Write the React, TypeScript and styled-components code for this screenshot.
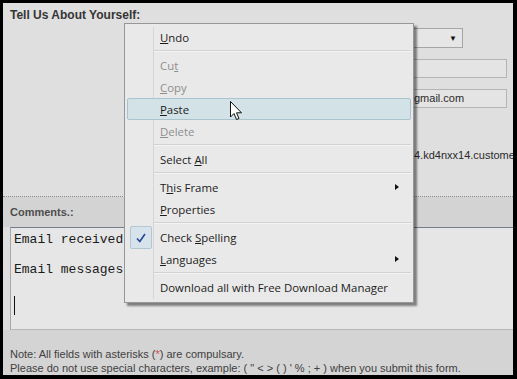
import styled, { createGlobalStyle } from "styled-components";

const GlobalStyle = createGlobalStyle`
  html, body {
    margin: 0;
    padding: 0;
    background: #000;
  }
  body {
    width: 517px;
    height: 379px;
    overflow: hidden;
  }
`;

const Frame = styled.div`
  position: relative;
  width: 510px;
  height: 372px;
  margin: 3px 0 0 3px;
  background: #dfdfdf;
  font-family: "Liberation Sans", Arial, sans-serif;
  overflow: hidden;
  display: flex;
  flex-direction: column;
`;

const TopSection = styled.div`
  height: 195px;
  padding: 5px 0 0 7px;
  box-sizing: border-box;
  border-bottom: 1px dotted #8a8a8a;
  display: flex;
  flex-direction: column;
`;

const Title = styled.div`
  font-size: 12px;
  font-weight: bold;
  color: #353535;
  line-height: 14px;
`;

const Fields = styled.div`
  margin: 6px 0 0 388px;
  display: flex;
  flex-direction: column;
  gap: 11px;
`;

const Select = styled.div`
  width: 65px;
  height: 20px;
  box-sizing: border-box;
  border: 1px solid #a6a6a6;
  background: #e6e6e6;
  display: flex;
  align-items: center;
  justify-content: flex-end;
  padding-right: 5px;
  font-size: 8px;
  color: #111;
`;

const Input = styled.div`
  width: 109px;
  height: 19px;
  box-sizing: border-box;
  border: 1px solid #b4b4b4;
  background: #e4e4e4;
  font-size: 11px;
  line-height: 17px;
  color: #2a2a2a;
  padding-left: 15px;
  white-space: nowrap;
`;

const LongValue = styled.div`
  width: 115px;
  margin-top: 30px;
  padding-left: 16px;
  box-sizing: border-box;
  font-size: 11px;
  color: #2a2a2a;
  white-space: nowrap;
  overflow: hidden;
`;

const CommentsHeader = styled.div`
  height: 30px;
  background: #d3d3d3;
  padding-left: 7px;
  display: flex;
  align-items: center;
  font-size: 11px;
  font-weight: bold;
  color: #4e4e4e;
`;

const TextBox = styled.div`
  margin-left: 7px;
  height: 103px;
  box-sizing: border-box;
  border-top: 1px solid #6f7f8f;
  border-left: 1px solid #a8a8a8;
  border-bottom: 1px solid #b8b8b8;
  background: #e6e6e6;
  padding: 4px 0 0 3px;
  font-family: "Liberation Mono", "Courier New", monospace;
  font-size: 13px;
  line-height: 15px;
  color: #1a1a1a;
  white-space: pre;
`;

const Caret = styled.span`
  display: inline-block;
  width: 1px;
  height: 19px;
  background: #111;
  vertical-align: -6px;
  margin-top: 4px;
`;

const Notes = styled.div`
  flex: 1;
  background: #d4d4d4;
  padding: 17px 0 0 7px;
  font-size: 11px;
  line-height: 14px;
  color: #3f3f3f;
  white-space: nowrap;
`;

const Star = styled.span`
  color: #d84a4a;
`;

const Menu = styled.div`
  position: absolute;
  left: 121px;
  top: 20px;
  width: 290px;
  box-sizing: border-box;
  border: 1px solid #979797;
  background: #e9e9e9;
  padding: 2px 2px 4px;
  box-shadow: 3px 3px 2px rgba(0, 0, 0, 0.45);
  font-family: "Open Sans", "Noto Sans", sans-serif;
  font-size: 11.4px;
  z-index: 5;
`;

const Gutter = styled.div`
  position: absolute;
  left: 28px;
  top: 3px;
  bottom: 3px;
  width: 1px;
  background: #d6d6d6;
`;

const Item = styled.div<{ $disabled?: boolean; $active?: boolean }>`
  position: relative;
  height: 22px;
  box-sizing: border-box;
  display: flex;
  align-items: center;
  padding-left: 32px;
  color: ${(p) => (p.$disabled ? "#8e8e8e" : "#1c1c1c")};
  border: 1px solid ${(p) => (p.$active ? "#a9c4cd" : "transparent")};
  border-radius: 2px;
  background: ${(p) => (p.$active ? "#d3e2e6" : "transparent")};
`;

const Separator = styled.div`
  height: 6px;
  display: flex;
  align-items: center;
  padding-left: 27px;
  &::after {
    content: "";
    flex: 1;
    height: 1px;
    background: #d2d2d2;
    border-bottom: 1px solid #f4f4f4;
  }
`;

const Arrow = styled.span`
  position: absolute;
  right: 11px;
  top: 7px;
  width: 0;
  height: 0;
  border-top: 3.5px solid transparent;
  border-bottom: 3.5px solid transparent;
  border-left: 4px solid #111;
`;

const CheckBox = styled.span`
  position: absolute;
  left: 2px;
  top: -1px;
  width: 22px;
  height: 23px;
  box-sizing: border-box;
  border: 1px solid #b3c6d2;
  border-radius: 2px;
  background: #d6e3ea;
  display: flex;
  align-items: center;
  justify-content: center;
`;

const Pointer = styled.svg`
  position: absolute;
  left: 227px;
  top: 98px;
  z-index: 6;
`;

const Acc = ({ text, at }: { text: string; at: number }) => (
  <span>
    {text.slice(0, at)}
    <u>{text[at]}</u>
    {text.slice(at + 1)}
  </span>
);

export default function App() {
  return (
    <>
      <GlobalStyle />
      <Frame>
        <TopSection>
          <Title>Tell Us About Yourself:</Title>
          <Fields>
            <Select>▼</Select>
            <Input />
            <Input>gmail.com</Input>
            <LongValue>4.kd4nxx14.customer</LongValue>
          </Fields>
        </TopSection>
        <CommentsHeader>Comments.:</CommentsHeader>
        <TextBox>
          {"Email received\n\nEmail messages\n\n"}
          <Caret />
        </TextBox>
        <Notes>
          Note: All fields with asterisks (<Star>*</Star>) are compulsary.
          <br />
          Please do not use special characters, example: ( " &lt; &gt; ( ) ' % ; + ) when you submit this form.
        </Notes>

        <Menu>
          <Gutter />
          <Item>
            <Acc text="Undo" at={0} />
          </Item>
          <Separator />
          <Item $disabled>
            <Acc text="Cut" at={2} />
          </Item>
          <Item $disabled>
            <Acc text="Copy" at={0} />
          </Item>
          <Item $active>
            <Acc text="Paste" at={0} />
          </Item>
          <Item $disabled>
            <Acc text="Delete" at={0} />
          </Item>
          <Separator />
          <Item>
            <Acc text="Select All" at={7} />
          </Item>
          <Separator />
          <Item>
            <Acc text="This Frame" at={1} />
            <Arrow />
          </Item>
          <Item>
            <Acc text="Properties" at={0} />
          </Item>
          <Separator />
          <Item>
            <CheckBox>
              <svg width="12" height="12" viewBox="0 0 12 12">
                <path d="M2 6.5 L4.8 9.5 L10 2" fill="none" stroke="#23479b" strokeWidth="1.6" />
              </svg>
            </CheckBox>
            <Acc text="Check Spelling" at={6} />
          </Item>
          <Item>
            <Acc text="Languages" at={0} />
            <Arrow />
          </Item>
          <Separator />
          <Item>Download all with Free Download Manager</Item>
        </Menu>

        <Pointer width="13" height="21" viewBox="0 0 13 21">
          <path
            d="M0.5 0.5 L0.5 16 L4 12.5 L6.5 18.5 L9 17.5 L6.5 11.8 L11.5 11.8 Z"
            fill="#fff"
            stroke="#111"
            strokeWidth="1"
            strokeLinejoin="round"
          />
        </Pointer>
      </Frame>
    </>
  );
}
